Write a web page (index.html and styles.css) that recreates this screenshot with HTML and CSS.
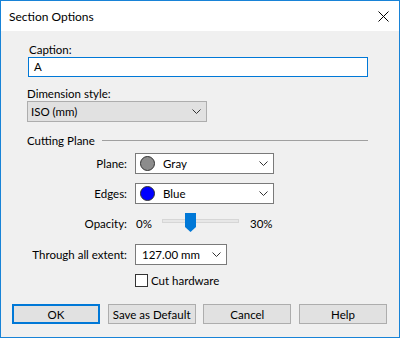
FILE: index.html
```html
<!DOCTYPE html>
<html lang="en">
<head>
    <meta charset="UTF-8">
    <title>Section Options</title>
    <link rel="stylesheet" href="styles.css">
</head>
<body>
    <div class="dialog">
        <div class="titlebar">
            <span class="title">Section Options</span>
            <svg class="close" width="11" height="11" viewBox="0 0 11 11">
                <path d="M0.5 0.5 L10.5 10.5 M10.5 0.5 L0.5 10.5" stroke="#000" stroke-width="1" fill="none"/>
            </svg>
        </div>
        <div class="dialog-body">
            <div class="form">
                <div class="lbl caption-lbl">Caption:</div>
                <div class="textbox">A</div>

                <div class="lbl dim-lbl">Dimension style:</div>
                <div class="combo combo-gray dim-combo">
                    <span>ISO (mm)</span>
                    <svg class="chev" width="9" height="5" viewBox="0 0 9 5"><path d="M0.5 0.5 L4.5 4.5 L8.5 0.5" stroke="#333" fill="none"/></svg>
                </div>

                <div class="group-title">
                    <span>Cutting Plane</span>
                    <span class="rule"></span>
                </div>

                <div class="row row-plane">
                    <span class="row-lbl">Plane:</span>
                    <div class="combo color-combo">
                        <span class="swatch swatch-gray"></span>
                        <span class="combo-text">Gray</span>
                        <svg class="chev" width="9" height="5" viewBox="0 0 9 5"><path d="M0.5 0.5 L4.5 4.5 L8.5 0.5" stroke="#333" fill="none"/></svg>
                    </div>
                </div>

                <div class="row row-edges">
                    <span class="row-lbl">Edges:</span>
                    <div class="combo color-combo">
                        <span class="swatch swatch-blue"></span>
                        <span class="combo-text">Blue</span>
                        <svg class="chev" width="9" height="5" viewBox="0 0 9 5"><path d="M0.5 0.5 L4.5 4.5 L8.5 0.5" stroke="#333" fill="none"/></svg>
                    </div>
                </div>

                <div class="row row-opacity">
                    <span class="row-lbl">Opacity:</span>
                    <div class="slider-line">
                        <span class="pct-min">0%</span>
                        <div class="slider">
                            <div class="track"></div>
                            <svg class="thumb" width="11" height="19" viewBox="0 0 11 19"><polygon points="0,0 11,0 11,14 5.5,19 0,14" fill="#0078d7"/></svg>
                        </div>
                        <span class="pct-max">30%</span>
                    </div>
                </div>

                <div class="row row-extent">
                    <span class="row-lbl">Through all extent:</span>
                    <div class="combo extent-combo">
                        <span class="combo-text">127.00 mm</span>
                        <svg class="chev" width="9" height="5" viewBox="0 0 9 5"><path d="M0.5 0.5 L4.5 4.5 L8.5 0.5" stroke="#333" fill="none"/></svg>
                    </div>
                </div>

                <div class="row row-check">
                    <span class="row-lbl"></span>
                    <label class="check">
                        <span class="box"></span>
                        <span>Cut hardware</span>
                    </label>
                </div>
            </div>

            <div class="buttons">
                <button class="btn btn-default">OK</button>
                <button class="btn">Save as Default</button>
                <button class="btn">Cancel</button>
                <button class="btn">Help</button>
            </div>
        </div>
    </div>
</body>
</html>
```

FILE: styles.css
```css
* {
    box-sizing: border-box;
}

body {
    margin: 0;
    font-family: Lato, "Liberation Sans", sans-serif;
    font-size: 11.5px;
    color: #000000;
    background-color: #ffffff;
}

.dialog {
    width: 400px;
    height: 338px;
    border: 1px solid #1883d7;
    display: flex;
    flex-direction: column;
    background-color: #f0f0f0;
}

.titlebar {
    height: 30px;
    background-color: #ffffff;
    display: flex;
    align-items: center;
    justify-content: space-between;
    padding: 0 10px 0 8px;
    font-size: 12px;
}

.close {
    display: block;
}

.dialog-body {
    flex: 1;
    background-color: #f0f0f0;
}

.form {
    padding: 11px 31px 0 26px;
    line-height: 15px;
}

.lbl {
    height: 15px;
}

.caption-lbl {
    padding-left: 2px;
}

.dim-lbl {
    margin-top: 9px;
}

.textbox {
    margin-left: 1px;
    width: 340px;
    height: 20px;
    line-height: 18px;
    padding-left: 5px;
    border: 1px solid #0078d7;
    background-color: #ffffff;
}

.combo {
    display: flex;
    align-items: center;
    height: 21px;
    border: 1px solid #7a7a7a;
    background-color: #ffffff;
    padding-right: 5px;
}

.combo .chev {
    margin-left: auto;
    display: block;
}

.combo-gray {
    background-color: #e1e1e1;
    border-color: #adadad;
    padding-left: 3px;
}

.dim-combo {
    width: 180px;
}

.group-title {
    display: flex;
    align-items: center;
    margin-top: 11px;
    height: 15px;
}

.group-title .rule {
    flex: 1;
    height: 1px;
    margin-left: 7px;
    background-color: #a0a0a0;
}

.row {
    display: grid;
    grid-template-columns: 100px auto;
    column-gap: 8px;
    align-items: center;
    justify-content: start;
}

.row-lbl {
    text-align: right;
}

.row-plane {
    margin-top: 5px;
}

.row-edges,
.row-opacity {
    margin-top: 9px;
}

.row-extent {
    margin-top: 11px;
}

.row-check {
    margin-top: 7px;
    height: 16px;
}

.color-combo {
    width: 139px;
    padding-left: 4px;
}

.swatch {
    width: 15px;
    height: 15px;
    border-radius: 50%;
    border: 1px solid #303030;
}

.swatch-gray {
    background-color: #8c8c8c;
}

.swatch-blue {
    background-color: #0000ff;
}

.color-combo .combo-text {
    margin-left: 8px;
}

.extent-combo {
    width: 92px;
    padding-left: 6px;
}

.slider-line {
    display: flex;
    align-items: center;
    height: 20px;
}

.pct-min {
    width: 27px;
    padding-left: 1px;
}

.slider {
    position: relative;
    width: 77px;
    height: 20px;
    margin-right: 11px;
}

.track {
    margin-top: 6px;
    height: 4px;
    background-color: #e7e7e7;
    border: 1px solid #d6d6d6;
}

.thumb {
    position: absolute;
    left: 23px;
    top: 0;
}

.check {
    display: flex;
    align-items: center;
}

.check .box {
    width: 13px;
    height: 13px;
    border: 1px solid #333333;
    background-color: #ffffff;
    margin-right: 3px;
}

.buttons {
    display: flex;
    justify-content: space-between;
    margin-top: 16px;
    padding: 0 12px 0 11px;
}

.btn {
    width: 88px;
    height: 20px;
    padding: 0;
    font-family: inherit;
    font-size: 11.5px;
    color: #000000;
    background-color: #e1e1e1;
    border: 1px solid #adadad;
}

.btn-default {
    border: 2px solid #0078d7;
}
```
